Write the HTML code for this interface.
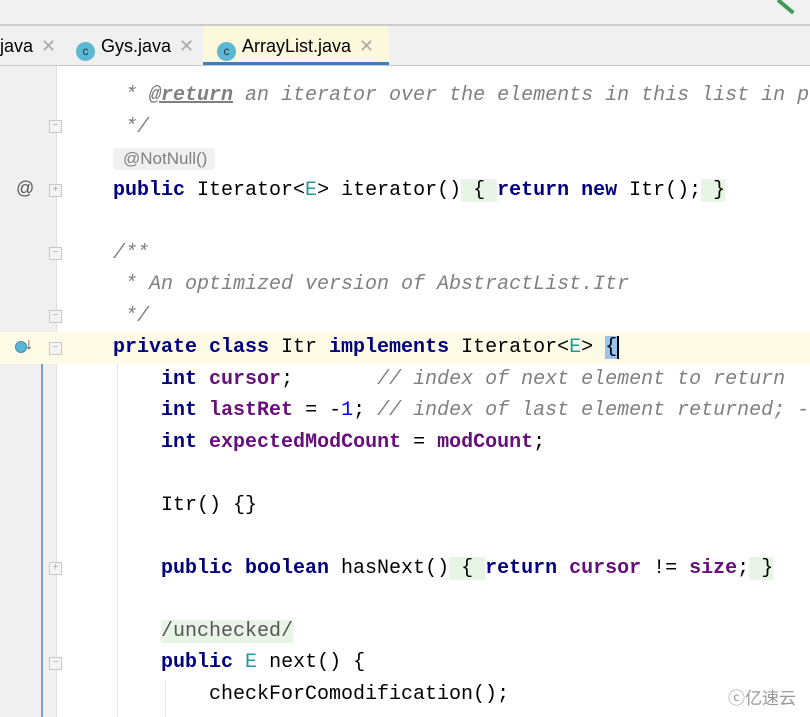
<!DOCTYPE html>
<html><head><meta charset="utf-8"><style>
body{margin:0;width:810px;height:717px;overflow:hidden;background:#fff;position:relative;font-family:"Liberation Sans","Noto Sans CJK SC",sans-serif}
.a{position:absolute}
.l{position:absolute;left:113px;height:31.5px;line-height:31.5px;font-family:"Liberation Mono",monospace;font-size:20px;white-space:pre;color:#000}
.k{color:#000080;font-weight:bold}
.f{color:#660e7a;font-weight:bold}
.c{color:#808080;font-style:italic}
.n{color:#0000ff}
.t{color:#20999d}
.g{background:#e8f4e6}
.tab{position:absolute;top:25px;height:40px;line-height:42px;font-size:18px;color:#000}
.ic{display:inline-block;width:19px;height:19px;border-radius:50%;background:#5ab8d3;color:#234;font-size:12px;line-height:19px;text-align:center;vertical-align:-3px;margin-right:6px}
.x{color:#aaa;margin-left:8px}
.fold{position:absolute;left:49px;width:11px;height:11px;border:1px solid #c8c8c8;background:#f4f4f4;font-size:10px;line-height:10px;text-align:center;color:#aaa}
</style></head><body>
<div class="a" style="left:0;top:0;width:810px;height:24px;background:#f2f2f2;border-bottom:2px solid #ccc"></div>
<div class="a" style="left:778px;top:-2px;width:20px;height:4px;background:#3d9a55;transform:rotate(40deg);transform-origin:left"></div>
<div class="a" style="left:0;top:26px;width:810px;height:39px;background:#f0f0f0;border-bottom:1px solid #c9c9c9"></div>
<div class="tab" style="left:0">java<span class="x">✕</span></div>
<div class="tab" style="left:76px"><span class="ic">c</span>Gys.java<span class="x">✕</span></div>
<div class="a" style="left:203px;top:26px;width:186px;height:36px;background:#fbf8dc;border-bottom:3px solid #3d7cc9"></div>
<div class="tab" style="left:217px"><span class="ic">c</span>ArrayList.java<span class="x">✕</span></div>
<div class="a" style="left:0;top:66px;width:56px;height:651px;background:#f0f0f0"></div>
<div class="a" style="left:56px;top:66px;width:1px;height:651px;background:#e0e0e0"></div>
<div class="a" style="left:41px;top:334px;width:2px;height:383px;background:#7a9fd6"></div>
<div class="a" style="left:0;top:332px;width:810px;height:32px;background:#fdfae6"></div>
<div class="a" style="left:117px;top:364px;width:1px;height:353px;background:#e8e8e8"></div>
<div class="a" style="left:165px;top:680px;width:1px;height:37px;background:#e8e8e8"></div>
<div class="fold" style="top:120px">−</div>
<div class="fold" style="top:184px">+</div>
<div class="fold" style="top:247px">−</div>
<div class="fold" style="top:310px">−</div>
<div class="fold" style="top:342px">−</div>
<div class="fold" style="top:562px">+</div>
<div class="fold" style="top:657px">−</div>
<div class="a" style="left:16px;top:178px;font-size:18px;color:#555">@</div>
<div class="a" style="left:15px;top:341px;width:10px;height:10px;border-radius:50%;background:#5ab8d3;border:1px solid #3a8fa8"></div>
<div class="a" style="left:25px;top:336px;font-size:16px;color:#555">↓</div>
<div class="l" style="top:80px"><span class="c"> * <u style="font-weight:bold">@return</u> an iterator over the elements in this list in p</span></div>
<div class="l" style="top:111.5px"><span class="c"> */</span></div>
<div class="a" style="left:113px;top:148px;height:22px;padding:0 8px 0 10px;line-height:22px;background:#f0f0f0;border-radius:4px;color:#808080;font-size:17px">@NotNull()</div>
<div class="l" style="top:174.5px"><span class="k">public</span> Iterator&lt;<span class="t">E</span>&gt; iterator()<span class="g"> { </span><span class="k">return new</span> Itr();<span class="g"> }</span></div>
<div class="l" style="top:237.5px"><span class="c">/**</span></div>
<div class="l" style="top:269px"><span class="c"> * An optimized version of AbstractList.Itr</span></div>
<div class="l" style="top:300.5px"><span class="c"> */</span></div>
<div class="l" style="top:332px"><span class="k">private class</span> Itr <span class="k">implements</span> Iterator&lt;<span class="t">E</span>&gt; <span style="background:#99c4ee;border-right:2px solid #000">{</span></div>
<div class="l" style="top:363.5px">    <span class="k">int</span> <span class="f">cursor</span>;       <span class="c">// index of next element to return</span></div>
<div class="l" style="top:395px">    <span class="k">int</span> <span class="f">lastRet</span> = -<span class="n">1</span>; <span class="c">// index of last element returned; -</span></div>
<div class="l" style="top:426.5px">    <span class="k">int</span> <span class="f">expectedModCount</span> = <span class="f">modCount</span>;</div>
<div class="l" style="top:489.5px">    Itr() {}</div>
<div class="l" style="top:552.5px">    <span class="k">public boolean</span> hasNext()<span class="g"> { </span><span class="k">return</span> <span class="f">cursor</span> != <span class="f">size</span>;<span class="g"> }</span></div>
<div class="l" style="top:615.5px">    <span class="g" style="color:#555">/unchecked/</span></div>
<div class="l" style="top:647px">    <span class="k">public</span> <span class="t">E</span> next() {</div>
<div class="l" style="top:678.5px">        checkForComodification();</div>
<div class="a" style="left:728px;top:684px;font-size:17px;color:#999">ⓒ亿速云</div>
</body></html>
